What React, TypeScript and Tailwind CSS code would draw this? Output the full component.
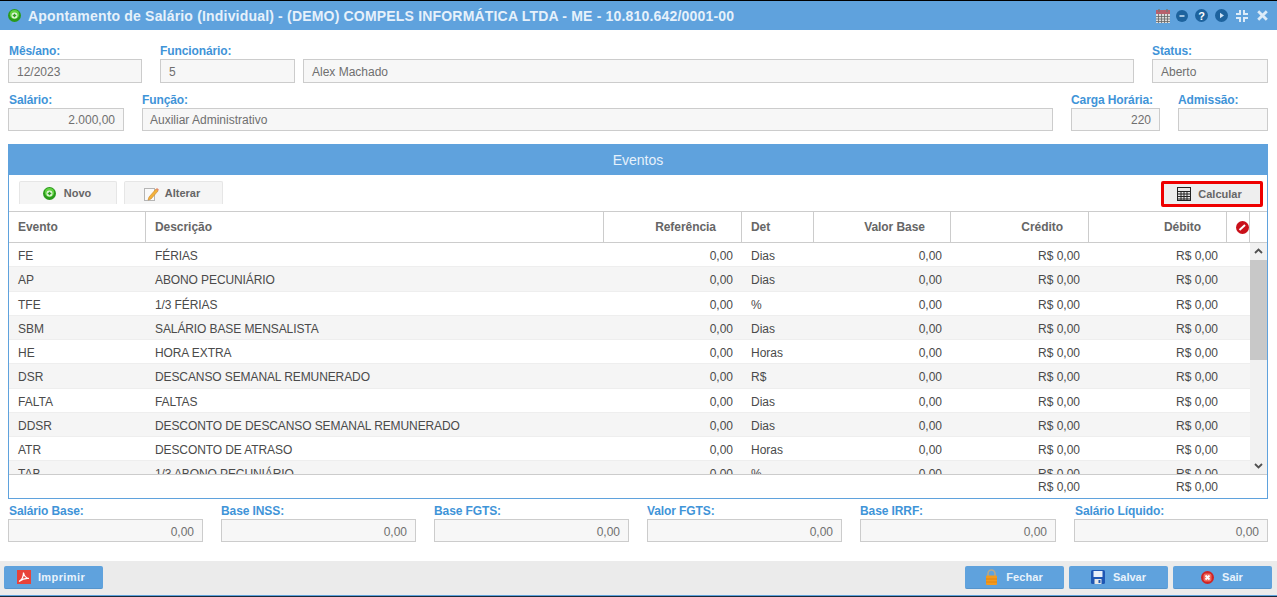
const font = "font-['Liberation_Sans',Arial,sans-serif]";

const rows = [
  ["FE", "FÉRIAS", "Dias"],
  ["AP", "ABONO PECUNIÁRIO", "Dias"],
  ["TFE", "1/3 FÉRIAS", "%"],
  ["SBM", "SALÁRIO BASE MENSALISTA", "Dias"],
  ["HE", "HORA EXTRA", "Horas"],
  ["DSR", "DESCANSO SEMANAL REMUNERADO", "R$"],
  ["FALTA", "FALTAS", "Dias"],
  ["DDSR", "DESCONTO DE DESCANSO SEMANAL REMUNERADO", "Dias"],
  ["ATR", "DESCONTO DE ATRASO", "Horas"],
  ["TAB", "1/3 ABONO PECUNIÁRIO", "%"],
];

const totals = ["Salário Base:", "Base INSS:", "Base FGTS:", "Valor FGTS:", "Base IRRF:", "Salário Líquido:"];

type FieldProps = {
  label?: string;
  value?: string;
  className?: string;
  labelClass?: string;
  inputClass?: string;
};

const Field = ({ label, value, className = "", labelClass = "", inputClass = "h-[24px] leading-[24px] px-[8px]" }: FieldProps) => (
  <div className={className}>
    <div className={`h-[16px] text-[12px] leading-[16px] font-bold tracking-[-0.1px] text-[#3f94d8] whitespace-nowrap ${labelClass}`}>{label || "\u00a0"}</div>
    <div className={`border border-[#cccccc] bg-[#f7f7f7] text-[12px] text-[#6f6f6f] ${inputClass}`}>
      {value}
    </div>
  </div>
);

const GreenPlus = ({ size = 14 }: { size?: number }) => (
  <svg width={size} height={size} viewBox="0 0 14 14">
    <circle cx="7" cy="7" r="7" fill="#2a9a1c" />
    <circle cx="7" cy="6" r="5" fill="#63d343" />
    <circle cx="7" cy="7" r="3.2" fill="#eaf8e4" />
    <path d="M7 5v4M5 7h4" stroke="#2f9e1f" strokeWidth="1.500" />
  </svg>
);

const Pencil = () => (
  <svg width="15" height="15" viewBox="0 0 15 15">
    <rect x="0.5" y="2.5" width="10" height="12" fill="#fafafa" stroke="#b5b5b5" />
    <path d="M5 11l-1 3 3-1 7-8-2-2z" fill="#f3b23c" stroke="#c9862a" strokeWidth="0.6" />
    <path d="M12 3l2 2 1-1.2-2-1.8z" fill="#e58a6a" />
  </svg>
);

const CalcIcon = () => (
  <svg width="14" height="14" viewBox="0 0 14 14">
    <rect x="0.5" y="0.5" width="13" height="13" fill="#e8e8e8" stroke="#222222" />
    <rect x="1" y="1" width="12" height="3" fill="#e8e8e8" />
    <path d="M1 4.500h12M1 7h12M1 9.500h12M1 12h12M4 4.500v9M7 4.500v9M10 4.500v9" stroke="#222222" strokeWidth="1" />
  </svg>
);

const BanIcon = () => (
  <svg width="13" height="13" viewBox="0 0 13 13">
    <circle cx="6.5" cy="6.5" r="6.5" fill="#c9101a" />
    <path d="M3.5 9l5.5-5" stroke="#ffffff" strokeWidth="2" />
  </svg>
);

const PdfIcon = () => (
  <svg width="14" height="14" viewBox="0 0 14 14">
    <rect width="14" height="14" fill="#e8433a" />
    <path d="M2 11.500C4.500 10 6.500 7 6.500 2.500c.5 3 2.500 5.500 5.500 6-3-.5-6.500.5-10 3z" fill="none" stroke="#ffffff" strokeWidth="1.200" />
  </svg>
);

const LockIcon = () => (
  <svg width="11" height="16" viewBox="0 0 11 16">
    <path d="M2 7V4.500a3.500 3.500 0 0 1 7 0V7" fill="none" stroke="#b9a98a" strokeWidth="1.500" />
    <rect y="6.500" width="11" height="9.500" rx="1" fill="#f39a1e" />
    <path d="M0 10h11M0 13h11" stroke="#d97f10" strokeWidth="0.8" />
  </svg>
);

const SaveIcon = () => (
  <svg width="14" height="14" viewBox="0 0 14 14">
    <rect width="14" height="14" rx="1.500" fill="#1f57b4" />
    <rect x="2.500" y="1" width="9" height="6" fill="#e8f0fa" />
    <rect x="3.500" y="9" width="7" height="5" fill="#e6e6e6" />
    <rect x="7.500" y="10" width="2" height="3" fill="#1f57b4" />
  </svg>
);

const ExitIcon = () => (
  <svg width="13" height="13" viewBox="0 0 13 13">
    <circle cx="6.500" cy="6.500" r="6.500" fill="#d02424" />
    <rect x="2.500" y="2.500" width="8" height="8" rx="2" fill="#f06a5e" />
    <path d="M4.500 4.500l4 4M8.500 4.500l-4 4" stroke="#ffffff" strokeWidth="1.800" />
  </svg>
);

const HeaderIcons = () => (
  <div className="flex items-center">
    <svg width="14" height="14" viewBox="0 0 14 14">
      <rect y="1" width="14" height="13" fill="#dcdcdc" />
      <rect y="1" width="14" height="4" fill="#b8606c" />
      <path d="M3 0v3M11 0v3" stroke="#777777" strokeWidth="1.500" />
      <path d="M0 7.500h14M0 10h14M0 12.500h14M2.500 5v9M5.500 5v9M8.500 5v9M11.500 5v9" stroke="#666666" strokeWidth="0.8" />
    </svg>
    <svg width="12" height="12" viewBox="0 0 12 12" className="ml-[6px]">
      <circle cx="6" cy="6" r="6" fill="#1d639e" />
      <path d="M3.500 6h5" stroke="#cfe3f5" strokeWidth="1.500" />
    </svg>
    <svg width="13" height="13" viewBox="0 0 13 13" className="ml-[7px]">
      <circle cx="6.500" cy="6.500" r="6.500" fill="#1d639e" />
      <text x="6.500" y="10.500" textAnchor="middle" fontSize="11" fontWeight="700" fill="#ffffff" fontFamily="Liberation Sans">?</text>
    </svg>
    <svg width="13" height="13" viewBox="0 0 13 13" className="ml-[7px]">
      <circle cx="6.500" cy="6.500" r="6.500" fill="#1d639e" />
      <path d="M5 3.800v5.400l4-2.700z" fill="#cfe3f5" />
    </svg>
    <svg width="14" height="14" viewBox="0 0 14 14" className="ml-[7px]">
      <path d="M5 1v4H1M9 1v4h4M5 13V9H1M9 13V9h4" fill="none" stroke="#dcebf8" strokeWidth="2" />
    </svg>
    <svg width="11" height="11" viewBox="0 0 11 11" className="ml-[8px]">
      <path d="M1.200 1.200l8.600 8.600M9.800 1.200l-8.600 8.600" stroke="#dcebf8" strokeWidth="2.800" />
    </svg>
  </div>
);

const FooterButton = ({ icon, label, className = "" }: { icon: React.ReactNode; label: string; className?: string }) => (
  <button className={`w-[99px] h-[23px] rounded-[2px] bg-[#5fa2dd] border-b border-[#5594cc] flex items-center justify-center text-[11px] font-bold text-[#e8f2fb] ${className}`}>
    {icon}
    <span>{label}</span>
  </button>
);

const colW = ["w-[137px]", "w-[458px]", "w-[138px]", "w-[72px]", "w-[137px]", "w-[138px]", "w-[138px]"];

export default function App() {
  return (
    <div className={`${font} w-[1277px] h-[597px] overflow-hidden bg-white flex flex-col border-t border-black`}>
      <div className="h-[29px] shrink-0 bg-[#5fa2dd] flex items-center pl-[8px] pr-[9px] justify-between">
        <div className="flex items-center gap-[7px]">
          <GreenPlus size={13} />
          <span className="text-[14px] leading-[30px] font-bold tracking-[0.185px] text-[#e6f1fb] whitespace-nowrap">
            Apontamento de Salário (Individual) - (DEMO) COMPELS INFORMÁTICA LTDA - ME - 10.810.642/0001-00
          </span>
        </div>
        <HeaderIcons />
      </div>

      <div className="ml-[8px] pt-[13px] shrink-0 w-[1260px]">
        <div className="flex">
          <Field label="Mês/ano:" value="12/2023" className="w-[134px]" labelClass="pl-[1px]" />
          <Field label="Funcionário:" value="5" className="w-[135px] ml-[18px]" />
          <Field value="Alex Machado" className="w-[831px] ml-[8px]" />
          <Field label="Status:" value="Aberto" className="w-[116px] ml-[18px]" />
        </div>
        <div className="flex mt-[9px]">
          <Field label="Salário:" value="2.000,00" className="w-[116px]" labelClass="pl-[1px]" inputClass="h-[23px] leading-[22px] px-[8px] text-right" />
          <Field label="Função:" value="Auxiliar Administrativo" className="w-[911px] ml-[18px]" inputClass="h-[23px] leading-[22px] px-[7px]" />
          <Field label="Carga Horária:" value="220" className="w-[89px] ml-[18px]" inputClass="h-[23px] leading-[22px] px-[8px] text-right" />
          <Field label="Admissão:" className="w-[90px] ml-[18px]" inputClass="h-[23px]" />
        </div>
      </div>

      <div className="ml-[8px] w-[1260px] mt-[13px] h-[355px] shrink-0 border border-[#5fa2dd] border-t-0 flex flex-col">
        <div className="h-[31px] shrink-0 -mx-[1px] bg-[#5fa2dd] text-center text-[14px] leading-[32px] text-[#e6f1fb]">Eventos</div>

        <div className="h-[36px] shrink-0 flex justify-between pl-[10px] pr-[4px] pt-[6px]">
          <div className="flex gap-[7px]">
            <div className="w-[98px] h-[23px] pr-[2px] rounded-t-[2px] border border-b-0 border-[#e6e6e6] bg-[#f5f5f5] flex items-center justify-center gap-[8px] text-[11px] font-bold text-[#666666]">
              <GreenPlus size={13} />
              Novo
            </div>
            <div className="w-[99px] h-[23px] pr-[3px] rounded-t-[2px] border border-b-0 border-[#e6e6e6] bg-[#f5f5f5] flex items-center justify-center gap-[6px] text-[11px] font-bold text-[#666666]">
              <Pencil />
              Alterar
            </div>
          </div>
          <div className="w-[102px] h-[26px] pr-[5px] rounded-[2px] border-[3px] border-[#ee0000] bg-[#eeeeee] flex items-center justify-center gap-[7px] text-[11px] font-bold text-[#666666]">
            <CalcIcon />
            Calcular
          </div>
        </div>

        <div className="h-[32px] shrink-0 flex border-y border-[#cccccc] text-[12px] font-bold text-[#666666] leading-[30px] tracking-[-0.05px]">
          <div className={`${colW[0]} border-r border-[#cccccc] pl-[9px]`}>Evento</div>
          <div className={`${colW[1]} border-r border-[#cccccc] pl-[9px]`}>Descrição</div>
          <div className={`${colW[2]} border-r border-[#cccccc] text-right pr-[25px]`}>Referência</div>
          <div className={`${colW[3]} border-r border-[#cccccc] pl-[9px]`}>Det</div>
          <div className={`${colW[4]} border-r border-[#cccccc] text-right pr-[25px]`}>Valor Base</div>
          <div className={`${colW[5]} border-r border-[#cccccc] text-right pr-[25px]`}>Crédito</div>
          <div className={`${colW[6]} border-r border-[#cccccc] text-right pr-[25px]`}>Débito</div>
          <div className="w-[23px] border-r border-[#cccccc] flex items-center justify-end">
            <BanIcon />
          </div>
        </div>

        <div className="h-[232px] shrink-0 flex overflow-hidden border-b border-[#cccccc]">
          <div className="flex-1 overflow-hidden">
            {rows.map((r, i) => (
              <div
                key={r[0]}
                className={`h-[24.25px] flex border-b border-[#eeeeee] text-[12px] leading-[26px] text-[#4a4a4a] ${i % 2 ? "bg-[#f5f5f5]" : "bg-white"}`}
              >
                <div className={`${colW[0]} pl-[9px]`}>{r[0]}</div>
                <div className={`${colW[1]} pl-[9px] whitespace-nowrap tracking-[-0.1px]`}>{r[1]}</div>
                <div className={`${colW[2]} text-right pr-[9px]`}>0,00</div>
                <div className={`${colW[3]} pl-[9px]`}>{r[2]}</div>
                <div className={`${colW[4]} text-right pr-[9px]`}>0,00</div>
                <div className={`${colW[5]} text-right pr-[9px]`}>R$ 0,00</div>
                <div className={`${colW[6]} text-right pr-[9px]`}>R$ 0,00</div>
              </div>
            ))}
          </div>
          <div className="w-[17px] shrink-0 bg-[#f1f1f1] flex flex-col">
            <div className="h-[17px] pb-[2px] flex items-center justify-center">
              <svg width="9" height="6" viewBox="0 0 9 6"><path d="M1 5l3.500-3.500L8 5" fill="none" stroke="#505050" strokeWidth="1.800" /></svg>
            </div>
            <div className="h-[100px] bg-[#c8c8c8]" />
            <div className="flex-1" />
            <div className="h-[17px] flex items-center justify-center">
              <svg width="9" height="6" viewBox="0 0 9 6"><path d="M1 1l3.500 3.500L8 1" fill="none" stroke="#505050" strokeWidth="1.800" /></svg>
            </div>
          </div>
        </div>

        <div className="flex-1 flex text-[12px] leading-[25px] text-[#4a4a4a]">
          <div className="w-[942px]" />
          <div className={`${colW[5]} text-right pr-[9px]`}>R$ 0,00</div>
          <div className={`${colW[6]} text-right pr-[9px]`}>R$ 0,00</div>
        </div>
      </div>

      <div className="ml-[8px] w-[1260px] mt-[4px] shrink-0 grid grid-cols-[195px_195px_195px_195px_196px_194px] gap-x-[18px]">
        {totals.map((t, i) => (
          <Field
            key={t}
            label={t}
            value="0,00"
            labelClass={i === 0 || i === 5 ? "pl-[1px]" : ""}
            inputClass="h-[23px] leading-[24px] px-[8px] text-right"
          />
        ))}
      </div>

      <div className="mt-[19px] flex-1 bg-[#ebebeb] flex items-start justify-between pt-[5px] px-[4px]">
        <FooterButton icon={<PdfIcon />} label="Imprimir" className="gap-[7px] pr-[5px] tracking-[0.4px]" />
        <div className="flex gap-[5px] mr-[1px]">
          <FooterButton icon={<LockIcon />} label="Fechar" className="gap-[9px] tracking-[0.1px]" />
          <FooterButton icon={<SaveIcon />} label="Salvar" className="gap-[8px]" />
          <FooterButton icon={<ExitIcon />} label="Sair" className="gap-[8px] pr-[1px]" />
        </div>
      </div>
      <div className="h-[1px] shrink-0 bg-[#5fa2dd]" />
      <div className="h-[1px] shrink-0 bg-[#1a2a3a]" />
    </div>
  );
}
